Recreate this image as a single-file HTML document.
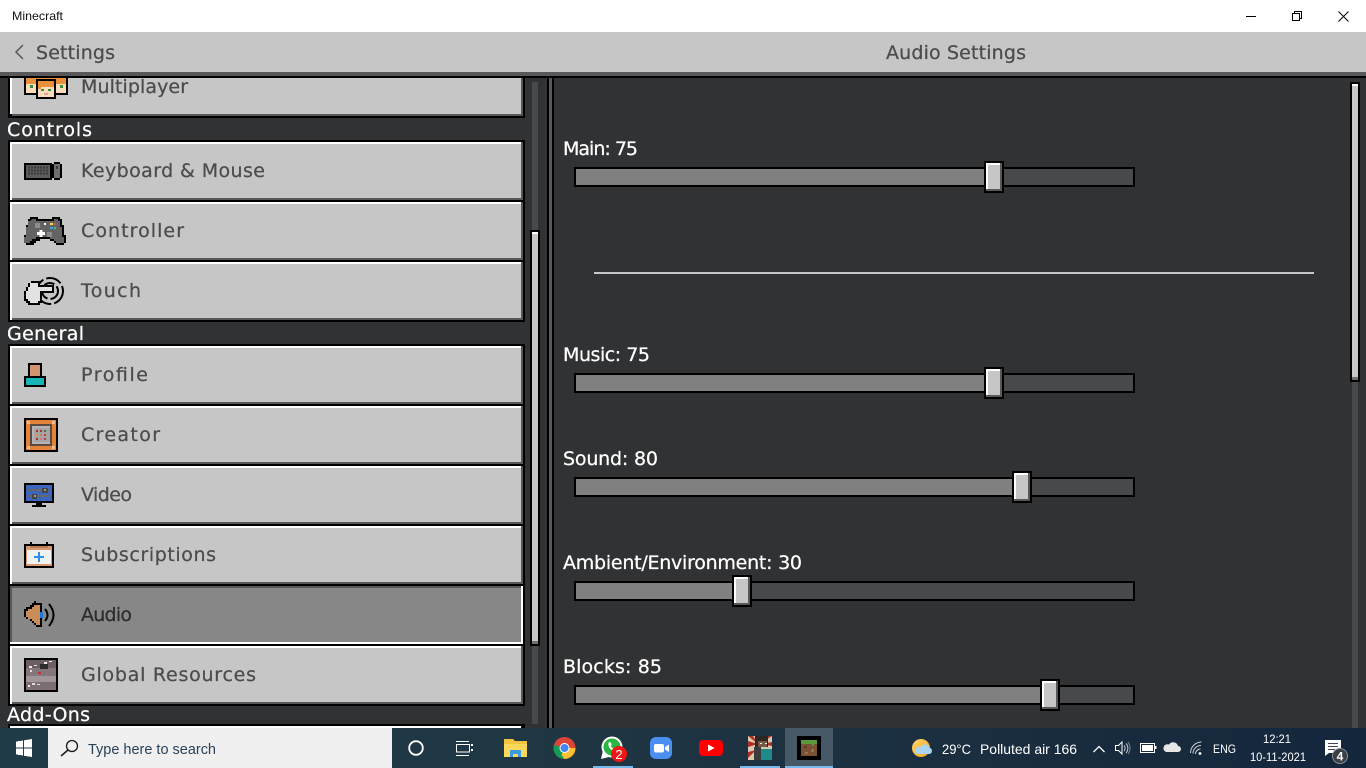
<!DOCTYPE html>
<html lang="en">
<head>
<meta charset="utf-8">
<title>Minecraft</title>
<style>
html,body{margin:0;padding:0;width:1366px;height:768px;overflow:hidden;background:#313233}
svg{display:block}
.m{font-family:"DejaVu Sans","Liberation Sans",sans-serif;font-size:19px;stroke-width:.25}
.b{fill:#4c4c4c;stroke:#4c4c4c}
.w{fill:#fff;stroke:#fff}
.s{font-family:"Liberation Sans",sans-serif}
</style>
</head>
<body>
<svg width="1366" height="768" viewBox="0 0 1366 768" xmlns="http://www.w3.org/2000/svg">
<defs>
<linearGradient id="tb" x1="0" x2="1" y1="0" y2="0"><stop offset="0" stop-color="#203c48"/><stop offset=".45" stop-color="#1f3542"/><stop offset="1" stop-color="#14263c"/></linearGradient>
<linearGradient id="sun" x1="0" x2="1" y1="0" y2="1"><stop offset="0" stop-color="#ffd96a"/><stop offset="1" stop-color="#f5a020"/></linearGradient>
</defs>

<rect width="1366" height="768" fill="#313233"/>

<g shape-rendering="crispEdges">
<!-- Multiplayer button -->
<rect x="8" y="70" width="517" height="48" fill="#000"/><rect x="10" y="72" width="511" height="42" fill="#c6c6c6"/><rect x="10" y="72" width="2" height="42" fill="#fff"/><rect x="12" y="114" width="511" height="2" fill="#58585a"/><rect x="521" y="72" width="2" height="44" fill="#58585a"/>
<!-- Keyboard -->
<rect x="8" y="140" width="517" height="62" fill="#000"/><rect x="10" y="142" width="513" height="58" fill="#58585a"/><rect x="10" y="142" width="511" height="56" fill="#fff"/><rect x="12" y="144" width="509" height="54" fill="#c6c6c6"/><rect x="10" y="198" width="2" height="2" fill="#fff"/>
<!-- Controller -->
<rect x="8" y="200" width="517" height="62" fill="#000"/><rect x="10" y="202" width="513" height="58" fill="#58585a"/><rect x="10" y="202" width="511" height="56" fill="#fff"/><rect x="12" y="204" width="509" height="54" fill="#c6c6c6"/><rect x="10" y="258" width="2" height="2" fill="#fff"/>
<!-- Touch -->
<rect x="8" y="260" width="517" height="62" fill="#000"/><rect x="10" y="262" width="513" height="58" fill="#58585a"/><rect x="10" y="262" width="511" height="56" fill="#fff"/><rect x="12" y="264" width="509" height="54" fill="#c6c6c6"/><rect x="10" y="318" width="2" height="2" fill="#fff"/>
<!-- Profile -->
<rect x="8" y="344" width="517" height="62" fill="#000"/><rect x="10" y="346" width="513" height="58" fill="#58585a"/><rect x="10" y="346" width="511" height="56" fill="#fff"/><rect x="12" y="348" width="509" height="54" fill="#c6c6c6"/><rect x="10" y="402" width="2" height="2" fill="#fff"/>
<!-- Creator -->
<rect x="8" y="404" width="517" height="62" fill="#000"/><rect x="10" y="406" width="513" height="58" fill="#58585a"/><rect x="10" y="406" width="511" height="56" fill="#fff"/><rect x="12" y="408" width="509" height="54" fill="#c6c6c6"/><rect x="10" y="462" width="2" height="2" fill="#fff"/>
<!-- Video -->
<rect x="8" y="464" width="517" height="62" fill="#000"/><rect x="10" y="466" width="513" height="58" fill="#58585a"/><rect x="10" y="466" width="511" height="56" fill="#fff"/><rect x="12" y="468" width="509" height="54" fill="#c6c6c6"/><rect x="10" y="522" width="2" height="2" fill="#fff"/>
<!-- Subscriptions -->
<rect x="8" y="524" width="517" height="62" fill="#000"/><rect x="10" y="526" width="513" height="58" fill="#58585a"/><rect x="10" y="526" width="511" height="56" fill="#fff"/><rect x="12" y="528" width="509" height="54" fill="#c6c6c6"/><rect x="10" y="582" width="2" height="2" fill="#fff"/>
<!-- Audio (selected) -->
<rect x="8" y="584" width="517" height="62" fill="#000"/><rect x="10" y="586" width="513" height="58" fill="#fff"/><rect x="10" y="586" width="511" height="56" fill="#58585a"/><rect x="12" y="588" width="509" height="54" fill="#878787"/>
<!-- Global -->
<rect x="8" y="644" width="517" height="62" fill="#000"/><rect x="10" y="646" width="513" height="58" fill="#58585a"/><rect x="10" y="646" width="511" height="56" fill="#fff"/><rect x="12" y="648" width="509" height="54" fill="#c6c6c6"/><rect x="10" y="702" width="2" height="2" fill="#fff"/>
<!-- Next -->
<rect x="8" y="724" width="517" height="6" fill="#000"/><rect x="10" y="726" width="511" height="4" fill="#fff"/>

<!-- left scrollbar -->
<rect x="532" y="82" width="6" height="642" fill="#48494a"/>
<rect x="530" y="230" width="10" height="416" fill="#000"/><rect x="532" y="232" width="6" height="412" fill="#c6c6c6"/><rect x="532" y="232" width="6" height="2" fill="#fff"/><rect x="532" y="641" width="6" height="3" fill="#6f6f6f"/>

<!-- divider -->
<rect x="547" y="76" width="2" height="652" fill="#000"/><rect x="549" y="76" width="3" height="652" fill="#58585a"/><rect x="552" y="76" width="2" height="652" fill="#000"/>

<!-- right scrollbar -->
<rect x="1352" y="84" width="6" height="644" fill="#48494a"/>
<rect x="1350" y="82" width="10" height="300" fill="#000"/><rect x="1352" y="84" width="6" height="296" fill="#c6c6c6"/><rect x="1352" y="84" width="6" height="2" fill="#fff"/><rect x="1352" y="377" width="6" height="3" fill="#6f6f6f"/>

<!-- separator -->
<rect x="594" y="272" width="720" height="2" fill="#c6c6c6"/>

<!-- sliders -->
<rect x="574" y="167" width="561" height="20" fill="#000"/><rect x="576" y="169" width="557" height="16" fill="#48494a"/><rect x="576" y="169" width="410" height="16" fill="#808080"/>
<rect x="984" y="161" width="20" height="32" fill="#000"/><rect x="986" y="163" width="16" height="28" fill="#58585a"/><rect x="986" y="163" width="14" height="26" fill="#fff"/><rect x="988" y="165" width="12" height="24" fill="#c6c6c6"/>

<rect x="574" y="373" width="561" height="20" fill="#000"/><rect x="576" y="375" width="557" height="16" fill="#48494a"/><rect x="576" y="375" width="410" height="16" fill="#808080"/>
<rect x="984" y="367" width="20" height="32" fill="#000"/><rect x="986" y="369" width="16" height="28" fill="#58585a"/><rect x="986" y="369" width="14" height="26" fill="#fff"/><rect x="988" y="371" width="12" height="24" fill="#c6c6c6"/>

<rect x="574" y="477" width="561" height="20" fill="#000"/><rect x="576" y="479" width="557" height="16" fill="#48494a"/><rect x="576" y="479" width="438" height="16" fill="#808080"/>
<rect x="1012" y="471" width="20" height="32" fill="#000"/><rect x="1014" y="473" width="16" height="28" fill="#58585a"/><rect x="1014" y="473" width="14" height="26" fill="#fff"/><rect x="1016" y="475" width="12" height="24" fill="#c6c6c6"/>

<rect x="574" y="581" width="561" height="20" fill="#000"/><rect x="576" y="583" width="557" height="16" fill="#48494a"/><rect x="576" y="583" width="158" height="16" fill="#808080"/>
<rect x="732" y="575" width="20" height="32" fill="#000"/><rect x="734" y="577" width="16" height="28" fill="#58585a"/><rect x="734" y="577" width="14" height="26" fill="#fff"/><rect x="736" y="579" width="12" height="24" fill="#c6c6c6"/>

<rect x="574" y="685" width="561" height="20" fill="#000"/><rect x="576" y="687" width="557" height="16" fill="#48494a"/><rect x="576" y="687" width="466" height="16" fill="#808080"/>
<rect x="1040" y="679" width="20" height="32" fill="#000"/><rect x="1042" y="681" width="16" height="28" fill="#58585a"/><rect x="1042" y="681" width="14" height="26" fill="#fff"/><rect x="1044" y="683" width="12" height="24" fill="#c6c6c6"/>

<!-- Multiplayer faces -->
<rect x="24" y="72" width="44" height="23" fill="#000"/>
<rect x="26" y="72" width="40" height="21" fill="#f9dcbc"/>
<rect x="26" y="72" width="40" height="12" fill="#e8913a"/>
<rect x="30" y="85" width="3" height="3" fill="#3a8a3a"/><rect x="60" y="85" width="3" height="3" fill="#3a8a3a"/>
<rect x="36" y="79" width="20" height="20" fill="#000"/>
<rect x="38" y="81" width="16" height="16" fill="#f9dcbc"/>
<rect x="38" y="81" width="16" height="6" fill="#e8913a"/><rect x="38" y="87" width="3" height="2" fill="#e8913a"/>
<rect x="41" y="89" width="3" height="2" fill="#3a8a3a"/><rect x="48" y="89" width="3" height="2" fill="#3a8a3a"/><rect x="44" y="93" width="4" height="2" fill="#e8a090"/>

<!-- Keyboard icon -->
<rect x="24" y="163" width="28" height="17" fill="#000"/><rect x="26" y="165" width="24" height="13" fill="#5c5c5c"/>
<path d="M28 167.500h20M28 170.500h20M28 173.500h20" stroke="#3a3a3a" stroke-width="2" stroke-dasharray="2 1" fill="none"/>
<rect x="54" y="162" width="6" height="18" fill="#000"/><rect x="52" y="164" width="10" height="14" fill="#000"/><rect x="54" y="164" width="6" height="14" fill="#6e6e6e"/><rect x="56" y="166" width="2" height="3" fill="#3a3a3a"/>

<!-- Controller icon -->
<path d="M30 217h8v2h14v-2h8v2h2v6h2v10h2v8h-2v2h-8v-2h-2v-2h-4v-2h-10v2h-4v2h-2v2h-8v-2h-2v-8h2v-10h2v-6h2z" fill="#000"/>
<path d="M32 219h4v2h18v-2h4v2h2v6h2v10h2v6h-8v-2h-2v-2h-4v-2h-14v2h-4v2h-2v2h-6v-6h2v-10h2v-6h2z" fill="#636363"/>
<rect x="37" y="232" width="8" height="3" fill="#fff"/><rect x="39.500" y="230" width="3" height="7" fill="#fff"/>
<rect x="35" y="223" width="5" height="5" fill="#8d8d8d"/><rect x="47" y="232" width="5" height="5" fill="#8d8d8d"/>
<rect x="44" y="223" width="2" height="2" fill="#fff"/><rect x="50" y="223" width="3" height="2" fill="#e8d84c"/><rect x="54" y="223" width="2" height="2" fill="#d8505c"/><rect x="50" y="227" width="3" height="2" fill="#3ea0d8"/><rect x="54" y="227" width="2" height="2" fill="#5cb85c"/>
</g>

<!-- Touch icon -->
<circle cx="50" cy="291" r="13" fill="none" stroke="#000" stroke-width="2" stroke-dasharray="16 3"/>
<circle cx="50" cy="291" r="8" fill="none" stroke="#000" stroke-width="2" stroke-dasharray="12 3"/>
<g shape-rendering="crispEdges">
<path d="M31 281h9v4h14v8h-12v10h-2v2h-12v-2h-2v-2h-2v-10h2v-4h2v-4h3z" fill="#000"/>
<path d="M32 283h6v4h14v4h-12v10h-2v2h-8v-2h-2v-2h-2v-8h2v-4h2v-4z" fill="#e2e2e2"/>

<!-- Profile icon -->
<rect x="28" y="363" width="14" height="15" fill="#000"/><rect x="30" y="365" width="10" height="12" fill="#d19670"/>
<rect x="24" y="376" width="22" height="11" fill="#000"/><rect x="26" y="378" width="18" height="7" fill="#17b5b5"/><rect x="30" y="376" width="10" height="2" fill="#000"/>

<!-- Creator icon -->
<rect x="24" y="418" width="34" height="34" fill="#000"/><rect x="26" y="420" width="30" height="30" fill="#e38339"/>
<rect x="27" y="421" width="3" height="3" fill="#f0ba90"/><rect x="52" y="421" width="3" height="3" fill="#f0ba90"/><rect x="27" y="446" width="3" height="3" fill="#f0ba90"/><rect x="52" y="446" width="3" height="3" fill="#f0ba90"/>
<rect x="30" y="424" width="22" height="22" fill="#5b4a42"/><rect x="32" y="426" width="18" height="18" fill="#b7b3b4"/><rect x="34" y="428" width="16" height="14" fill="#a8a4a6"/>
<rect x="36" y="430" width="2" height="2" fill="#b03030"/><rect x="40" y="430" width="2" height="2" fill="#b03030"/><rect x="44" y="430" width="2" height="2" fill="#3a7a3a"/>
<rect x="36" y="434" width="2" height="2" fill="#d0963c"/><rect x="40" y="434" width="2" height="2" fill="#d07a60"/><rect x="44" y="434" width="2" height="2" fill="#c04040"/>
<rect x="36" y="438" width="2" height="2" fill="#b03030"/><rect x="40" y="438" width="2" height="2" fill="#d07a80"/><rect x="44" y="438" width="2" height="2" fill="#c04040"/>

<!-- Video icon -->
<rect x="24" y="483" width="30" height="20" fill="#000"/><rect x="26" y="485" width="26" height="16" fill="#3a66bf"/>
<rect x="28" y="489" width="22" height="2" fill="#666"/><rect x="28" y="495" width="22" height="2" fill="#666"/>
<rect x="42" y="488" width="6" height="5" fill="#444"/><rect x="44" y="489" width="2" height="2" fill="#999"/>
<rect x="32" y="494" width="5" height="5" fill="#444"/><rect x="34" y="495" width="2" height="2" fill="#999"/>
<rect x="36" y="503" width="6" height="2" fill="#000"/><rect x="32" y="505" width="14" height="2" fill="#000"/>

<!-- Subscriptions icon -->
<rect x="30" y="542" width="2" height="4" fill="#000"/><rect x="46" y="542" width="2" height="4" fill="#000"/>
<rect x="24" y="544" width="30" height="24" fill="#000"/><rect x="26" y="546" width="26" height="20" fill="#d79a70"/>
<rect x="27" y="550" width="24" height="14" fill="#f1f1f1"/><rect x="30" y="546" width="18" height="2" fill="#b87a50"/>
<rect x="34" y="556" width="10" height="2" fill="#2a90e8"/><rect x="38" y="552" width="2" height="10" fill="#2a90e8"/>

<!-- Audio icon -->
<path d="M36 603h6v24h-6v-2h-2v-2h-2v-2h-2v-2h-4v-2h-2v-8h2v-2h4v-2h2v-2h2v-2h2z" fill="#000"/>
<path d="M36 605h4v20h-4v-2h-2v-2h-2v-2h-4v-2h-2v-6h2v-2h4v-2h2v-2h2z" fill="#c98d5a"/>
<rect x="40" y="612" width="3" height="6" fill="#1a78d8"/>
</g>
<path d="M45 609q5 6 0 12M49 604q9 11 0 22" fill="none" stroke="#000" stroke-width="2"/>

<g shape-rendering="crispEdges">
<!-- Global icon -->
<rect x="24" y="658" width="34" height="34" fill="#000"/><rect x="26" y="660" width="30" height="30" fill="#85767c"/>
<rect x="26" y="660" width="30" height="8" fill="#6d5e64"/><rect x="26" y="676" width="30" height="6" fill="#a09599"/><rect x="26" y="682" width="30" height="8" fill="#7c6e74"/>
<rect x="40" y="664" width="8" height="5" fill="#2d2d2d"/><rect x="29" y="666" width="3" height="2" fill="#e8e8e8"/><rect x="34" y="665" width="3" height="1" fill="#e8e8e8"/><rect x="44" y="662" width="3" height="2" fill="#eee"/><rect x="49" y="661" width="3" height="1" fill="#eee"/><rect x="38" y="672" width="3" height="2" fill="#c03030"/><rect x="30" y="670" width="2" height="2" fill="#ddd"/><rect x="32" y="683" width="3" height="2" fill="#ddd"/><rect x="37" y="684" width="3" height="1" fill="#ddd"/><rect x="28" y="685" width="2" height="2" fill="#eee"/>

<!-- header and title -->
<rect x="0" y="0" width="1366" height="32" fill="#fff"/>
<rect x="0" y="32" width="1366" height="40" fill="#c6c6c6"/>
<rect x="0" y="72" width="1366" height="4" fill="#58585a"/>
<rect x="0" y="76" width="1366" height="2" fill="#000"/>
<rect x="0" y="78" width="8" height="40" fill="#313233"/>
<rect x="8" y="76" width="517" height="2" fill="#000"/>

<!-- window controls -->
<rect x="1246" y="16" width="10" height="1" fill="#000"/>
<rect x="1292.500" y="13.500" width="7" height="7" fill="none" stroke="#000"/>
<path d="M1294.500 13.500v-2h7v7h-2" fill="none" stroke="#000"/>
</g>
<path d="M1338.500 11.500l10 10M1348.500 11.500l-10 10" stroke="#000" stroke-width="1" fill="none"/>
<text x="12" y="20" class="s" font-size="12" fill="#111" textLength="51" lengthAdjust="spacingAndGlyphs">Minecraft</text>

<!-- header text -->
<path d="M23 45l-7 7 7 7" fill="none" stroke="#58585a" stroke-width="1.500"/>
<text x="36" y="59" class="m b" textLength="79">Settings</text>
<text x="886" y="59" class="m b" textLength="140">Audio Settings</text>

<!-- left labels -->
<text x="81" y="93" class="m b" textLength="107">Multiplayer</text>
<text x="7" y="136" class="m w" textLength="85">Controls</text>
<text x="81" y="177" class="m b" textLength="184">Keyboard &amp; Mouse</text>
<text x="81" y="237" class="m b" textLength="103">Controller</text>
<text x="81" y="297" class="m b" textLength="60">Touch</text>
<text x="7" y="340" class="m w" textLength="77">General</text>
<text x="81" y="381" class="m b" textLength="67">Profile</text>
<text x="81" y="441" class="m b" textLength="79">Creator</text>
<text x="81" y="501" class="m b" textLength="51">Video</text>
<text x="81" y="561" class="m b" textLength="135">Subscriptions</text>
<text x="81" y="621" class="m" fill="#2c2c2c" stroke="#2c2c2c" textLength="51">Audio</text>
<text x="81" y="681" class="m b" textLength="175">Global Resources</text>
<text x="7" y="721" class="m w" textLength="83">Add-Ons</text>

<!-- slider labels -->
<text x="563" y="155" class="m w" textLength="75">Main: 75</text>
<text x="563" y="361" class="m w" textLength="87">Music: 75</text>
<text x="563" y="465" class="m w" textLength="95">Sound: 80</text>
<text x="563" y="569" class="m w" textLength="239">Ambient/Environment: 30</text>
<text x="563" y="673" class="m w" textLength="99">Blocks: 85</text>

<!-- taskbar -->
<rect x="0" y="728" width="1366" height="40" fill="url(#tb)" shape-rendering="crispEdges"/>
<rect x="48" y="728" width="344" height="40" fill="#f0f0f0" shape-rendering="crispEdges"/>
<rect x="785" y="728" width="48" height="40" fill="#475866" shape-rendering="crispEdges"/>
<rect x="593" y="766" width="40" height="2" fill="#76b9ed" shape-rendering="crispEdges"/>
<rect x="740" y="766" width="40" height="2" fill="#76b9ed" shape-rendering="crispEdges"/>
<rect x="785" y="766" width="48" height="2" fill="#76b9ed" shape-rendering="crispEdges"/>

<!-- start -->
<g fill="#fff" shape-rendering="crispEdges"><path d="M16 741.500l7-1v7h-7zM24 740.300l8-1.300v8.500h-8zM16 748.500h7v7l-7-1zM24 748.500h8v8.500l-8-1.200z"/></g>

<!-- search -->
<circle cx="72" cy="746" r="5.500" fill="none" stroke="#1a1a1a" stroke-width="1.300"/>
<path d="M68 750l-7 6" stroke="#1a1a1a" stroke-width="1.500" fill="none"/>
<text x="88" y="754" class="s" font-size="14.500" fill="#2a4258" textLength="128" lengthAdjust="spacingAndGlyphs">Type here to search</text>

<!-- cortana -->
<circle cx="416" cy="748" r="6.800" fill="none" stroke="#fff" stroke-width="1.800"/>
<!-- task view -->
<g fill="none" stroke="#fff" stroke-width="1"><rect x="456.500" y="744.500" width="13" height="7.500"/><path d="M456 741.500h13M456 755.500h13"/></g>
<rect x="471" y="744" width="2" height="2" fill="#fff"/><rect x="471" y="749" width="2" height="2" fill="#fff"/>

<!-- explorer -->
<path d="M504 739h9l2 2h12v16h-23z" fill="#f4c33f"/>
<rect x="504" y="744" width="23" height="13" fill="#fbd75b"/>
<path d="M510 757v-7h11v7h-3v-3h-5v3z" fill="#3a9be0"/>

<!-- chrome -->
<circle cx="564.500" cy="748" r="11" fill="#db4437"/>
<path d="M564.500 748L555 753.500A11 11 0 0 0 564.500 759z" fill="#0f9d58"/>
<path d="M564.500 748L555 753.500A11 11 0 0 1 554 745z" fill="#0f9d58"/>
<path d="M564.500 748h11a11 11 0 0 1 -11 11l-3 -4z" fill="#fbc02d"/>
<circle cx="564.500" cy="748" r="5" fill="#fff"/><circle cx="564.500" cy="748" r="4" fill="#4285f4"/>

<!-- whatsapp -->
<circle cx="612" cy="747" r="10.500" fill="#fff"/>
<path d="M603 750l-2 9 8-2z" fill="#fff"/>
<circle cx="612" cy="747" r="8.500" fill="#2bb641"/>
<path d="M608.500 743c1-1.500 2-1 2.500 0l.7 1.500-1 1.300c.7 1.500 1.800 2.500 3.300 3.200l1.300-1 1.700.8c1 .6.800 1.700-.3 2.500-3.500 1.500-9.500-4.200-8.200-8.300z" fill="#fff"/>
<circle cx="619" cy="754" r="8" fill="#ef1616"/>
<text x="619" y="759" class="s" font-size="13" fill="#fff" text-anchor="middle">2</text>

<!-- zoom -->
<rect x="650" y="737" width="22" height="22" rx="6" fill="#4b8ff0"/>
<rect x="654" y="744" width="10" height="8.500" rx="2" fill="#fff"/>
<path d="M665 747l4-2.500v7.500l-4-2.500z" fill="#fff"/>

<!-- youtube -->
<rect x="699" y="740" width="24" height="16" rx="4" fill="#f00"/>
<path d="M708 744.500l6.500 3.500-6.500 3.500z" fill="#fff"/>

<!-- avatar -->
<rect x="748" y="736" width="24" height="24" fill="#d9c9b0" shape-rendering="crispEdges"/>
<path d="M748 736h5l5 8zM748 741v6l10-3zM748 752v6l8-8zM772 736h-6l-6 8zM772 742v4l-10-2z" fill="#b03028"/>
<g shape-rendering="crispEdges">
<rect x="755" y="736" width="13" height="11" fill="#2e2622"/>
<rect x="758" y="741" width="9" height="6" fill="#7a5a46"/>
<rect x="760" y="743" width="2" height="1" fill="#cfe"/><rect x="765" y="743" width="2" height="1" fill="#cfe"/>
<rect x="754" y="747" width="7" height="13" fill="#3c3c3c"/>
<rect x="761" y="749" width="11" height="11" fill="#1f8a8a"/>

<!-- grass block -->
<rect x="797" y="736" width="24" height="24" fill="#000"/>
<rect x="801" y="740" width="16" height="16" fill="#7a5233"/>
<rect x="801" y="740" width="16" height="4" fill="#5a9a3a"/>
<rect x="804" y="746" width="3" height="2" fill="#5a3a22"/><rect x="811" y="749" width="3" height="3" fill="#9a7048"/><rect x="805" y="752" width="3" height="2" fill="#9a7048"/><rect x="812" y="744" width="2" height="2" fill="#5a9a3a"/>
</g>

<!-- weather -->
<circle cx="921" cy="748" r="9" fill="url(#sun)"/>
<path d="M917 754h12a3.200 3.200 0 0 0 .5-6.300 4.500 4.500 0 0 0-8.500-.5 3.500 3.500 0 0 0-4 6.800z" fill="#a9d4f2"/>
<text x="942" y="754" class="s" font-size="14" fill="#fff" textLength="29" lengthAdjust="spacingAndGlyphs">29°C</text>
<text x="980" y="754" class="s" font-size="14" fill="#fff" textLength="97" lengthAdjust="spacingAndGlyphs">Polluted air 166</text>

<!-- tray -->
<path d="M1093.500 752l5.500-5.500 5.500 5.500" fill="none" stroke="#fff" stroke-width="1.300"/>
<path d="M1115.500 745.500h3l3.500-3.500v12l-3.500-3.500h-3z" fill="none" stroke="#fff" stroke-width="1"/>
<path d="M1124 745.500a4 4 0 0 1 0 5.500M1126 743.500a7 7 0 0 1 0 9.500" fill="none" stroke="#c8d0d8" stroke-width="1"/>
<path d="M1128 742a10 10 0 0 1 0 12" fill="none" stroke="#7d8a96" stroke-width="1"/>
<rect x="1140.500" y="743.500" width="14" height="9" fill="none" stroke="#fff"/><rect x="1142" y="745" width="11" height="6" fill="#fff"/><rect x="1155" y="746" width="1.500" height="3" fill="#fff"/>
<path d="M1166 752h12a3 3 0 0 0 0-6 5 5 0 0 0-9-1.500 4 4 0 0 0-3 7.500z" fill="#e6e6e6"/>
<g fill="none" stroke="#c8d0d8" stroke-width="1"><path d="M1190.500 753a11 11 0 0 1 11-11M1193 753.500a8 8 0 0 1 8-8M1195.500 754a5 5 0 0 1 5-5"/></g>
<circle cx="1200" cy="753.500" r="1.400" fill="#fff"/>
<text x="1213" y="753" class="s" font-size="12" fill="#fff" textLength="23" lengthAdjust="spacingAndGlyphs">ENG</text>
<text x="1277" y="743" class="s" font-size="12" fill="#fff" text-anchor="middle" textLength="28" lengthAdjust="spacingAndGlyphs">12:21</text>
<text x="1250" y="761" class="s" font-size="12" fill="#fff" textLength="56" lengthAdjust="spacingAndGlyphs">10-11-2021</text>

<!-- notifications -->
<path d="M1325 740h16v13h-12l-4 3z" fill="#fff"/>
<rect x="1328" y="743" width="10" height="1" fill="#445"/><rect x="1328" y="746" width="10" height="1" fill="#445"/><rect x="1328" y="749" width="7" height="1" fill="#445"/>
<circle cx="1340" cy="756" r="7.500" fill="#3a3f46" stroke="#8a8f96" stroke-width="1"/>
<text x="1340" y="760.500" class="s" font-size="12" font-weight="bold" fill="#fff" text-anchor="middle">4</text>
</svg>
</body>
</html>
